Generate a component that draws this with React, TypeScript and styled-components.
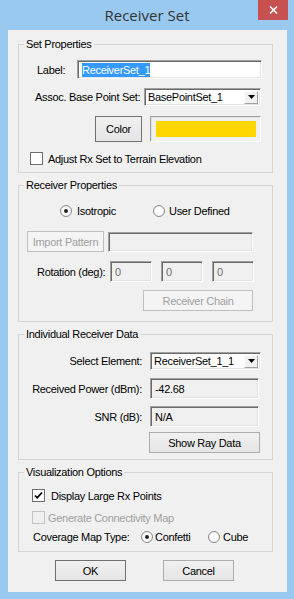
import React from "react";
import styled, { createGlobalStyle } from "styled-components";

const FONT = `"Liberation Sans", Arial, sans-serif`;

const Global = createGlobalStyle`
  html, body {
    margin: 0;
    padding: 0;
    background: #99c9ef;
  }
  * { box-sizing: border-box; }
`;

const Window = styled.div`
  width: 294px;
  height: 599px;
  background: #99c9ef;
  display: flex;
  flex-direction: column;
  font-family: ${FONT};
  font-size: 11px;
  letter-spacing: -0.3px;
  color: #000;
`;

const TitleBar = styled.div`
  height: 30px;
  display: flex;
  align-items: flex-start;
`;

const TitleSpacer = styled.div`
  width: 36px;
`;

const Title = styled.div`
  flex: 1;
  text-align: center;
  font-family: "Open Sans", "Noto Sans", sans-serif;
  font-size: 15px;
  letter-spacing: 0;
  line-height: 20px;
  padding-top: 5px;
  color: #333;
`;

const CloseBtn = styled.div`
  width: 30px;
  height: 20px;
  margin-right: 6px;
  background: #c75050;
  display: flex;
  align-items: center;
  justify-content: center;
`;

const Client = styled.div`
  margin: 0 7px 7px 8px;
  height: 562px;
  background: #f0f0f0;
  padding: 7px 0 0 10px;
`;

const Group = styled.fieldset<{ $h: number; $mt?: number }>`
  margin: ${p => p.$mt || 0}px 0 0 0;
  padding: 0;
  width: 255px;
  height: ${p => p.$h}px;
  border: 1px solid #d5d5d5;
  min-width: 0;
`;

const Legend = styled.legend`
  margin-left: 5px;
  padding: 0 2px;
  height: 14px;
  line-height: 14px;
  color: #000;
`;

const Row = styled.div<{ $mt: number; $h: number; $pl?: number; $gap?: number }>`
  display: flex;
  align-items: center;
  margin-top: ${p => p.$mt}px;
  height: ${p => p.$h}px;
  padding-left: ${p => p.$pl || 0}px;
  gap: ${p => p.$gap || 0}px;
`;

const Cell = styled.div<{ $w: number; $pl?: number; $right?: boolean }>`
  width: ${p => p.$w}px;
  flex: none;
  padding-left: ${p => (p.$right ? 0 : p.$pl || 0)}px;
  padding-right: ${p => (p.$right ? 8 : 0)}px;
  text-align: ${p => (p.$right ? "right" : "left")};
  white-space: nowrap;
`;

const Field = styled.div<{ $w: number; $h?: number; $bg?: string; $dim?: boolean; $ml?: number }>`
  width: ${p => p.$w}px;
  height: ${p => p.$h || 21}px;
  margin-left: ${p => p.$ml || 0}px;
  flex: none;
  background: ${p => p.$bg || "#fff"};
  border: 1px solid;
  border-color: #a0a0a0 #ffffff #ffffff #a0a0a0;
  box-shadow: inset 1px 1px 0 #696969, inset -1px -1px 0 #e3e3e3;
  display: flex;
  align-items: center;
  padding-left: 4px;
  color: ${p => (p.$dim ? "#6d6d6d" : "#000")};
  white-space: nowrap;
`;

const Selected = styled.span`
  background: #3399ff;
  color: #fff;
  padding: 1px 0;
`;

const Combo = styled.div<{ $w: number }>`
  width: ${p => p.$w}px;
  height: 18px;
  flex: none;
  background: #fff;
  border: 1px solid;
  border-color: #a0a0a0 #ffffff #ffffff #a0a0a0;
  box-shadow: inset 1px 1px 0 #696969, inset -1px -1px 0 #e3e3e3;
  display: flex;
  align-items: center;
  padding: 2px 2px 2px 3px;
`;

const ComboText = styled.div`
  flex: 1;
  white-space: nowrap;
`;

const ComboArrow = styled.div`
  width: 14px;
  height: 13px;
  background: #f0f0f0;
  border: 1px solid;
  border-color: #fff #a0a0a0 #a0a0a0 #fff;
  display: flex;
  align-items: center;
  justify-content: center;
`;

const Button = styled.div<{ $w: number; $h?: number; $disabled?: boolean; $dark?: boolean }>`
  width: ${p => p.$w}px;
  height: ${p => p.$h || 21}px;
  flex: none;
  display: flex;
  align-items: center;
  justify-content: center;
  border: 1px solid ${p => (p.$disabled ? "#bfbfbf" : p.$dark ? "#707070" : "#acacac")};
  background: ${p =>
    p.$disabled ? "#f4f4f4" : "linear-gradient(#f0f0f0, #e5e5e5)"};
  color: ${p => (p.$disabled ? "#a0a0a0" : "#000")};
  white-space: nowrap;
`;

const Swatch = styled.div`
  width: 111px;
  height: 26px;
  flex: none;
  border: 1px solid;
  border-color: #a0a0a0 #fff #fff #a0a0a0;
  box-shadow: inset 1px 1px 0 #e3e3e3;
  padding: 4px 4px 4px 5px;
  background: #f0f0f0;
`;

const SwatchFill = styled.div`
  width: 100%;
  height: 100%;
  background: #ffd700;
`;

const Check = styled.div<{ $disabled?: boolean }>`
  width: 13px;
  height: 13px;
  flex: none;
  border: 1px solid ${p => (p.$disabled ? "#c4c4c4" : "#6e6e6e")};
  background: ${p => (p.$disabled ? "#f0f0f0" : "#fff")};
  display: flex;
  align-items: center;
  justify-content: center;
`;

const Radio = styled.div<{ $on?: boolean }>`
  width: 12px;
  height: 12px;
  flex: none;
  border-radius: 50%;
  border: 1px solid #8a8a8a;
  background: radial-gradient(circle, #ffffff 40%, #e6e6e6 100%);
  display: flex;
  align-items: center;
  justify-content: center;
  &::after {
    content: "";
    display: ${p => (p.$on ? "block" : "none")};
    width: 4px;
    height: 4px;
    border-radius: 50%;
    background: #222;
  }
`;

const Option = styled.div<{ $w?: number; $gap: number }>`
  display: flex;
  align-items: center;
  gap: ${p => p.$gap}px;
  width: ${p => (p.$w ? `${p.$w}px` : "auto")};
  flex: none;
`;

const Text = styled.span<{ $dim?: boolean }>`
  color: ${p => (p.$dim ? "#a0a0a0" : "#000")};
  white-space: nowrap;
`;

const ButtonRow = styled.div`
  display: flex;
  margin-top: 8px;
  padding-left: 37px;
  gap: 37px;
`;

const Arrow = () => (
  <svg width="7" height="4" viewBox="0 0 7 4">
    <path d="M0 0h7L3.5 4z" fill="#000" />
  </svg>
);

const Tick = () => (
  <svg width="9" height="9" viewBox="0 0 9 9">
    <path d="M1 4.5l2.2 2.3L8 1.5" stroke="#000" strokeWidth="1.8" fill="none" />
  </svg>
);

export default function App() {
  return (
    <Window>
      <Global />
      <TitleBar>
        <TitleSpacer />
        <Title>Receiver Set</Title>
        <CloseBtn>
          <svg width="9" height="8" viewBox="0 0 9 8">
            <path d="M1 0.5l7 7M8 0.5l-7 7" stroke="#fff" strokeWidth="1.6" />
          </svg>
        </CloseBtn>
      </TitleBar>
      <Client>
        <Group $h={136}>
          <Legend>Set Properties</Legend>
          <Row $mt={9} $h={19}>
            <Cell $w={58} $pl={18}>Label:</Cell>
            <Field $w={185} $h={19}>
              <Selected>ReceiverSet_1</Selected>
            </Field>
          </Row>
          <Row $mt={9} $h={18}>
            <Cell $w={125} $pl={16}>Assoc. Base Point Set:</Cell>
            <Combo $w={117}>
              <ComboText>BasePointSet_1</ComboText>
              <ComboArrow><Arrow /></ComboArrow>
            </Combo>
          </Row>
          <Row $mt={10} $h={26} $pl={76} $gap={8}>
            <Button $w={47} $h={26} $dark>Color</Button>
            <Swatch><SwatchFill /></Swatch>
          </Row>
          <Row $mt={10} $h={13} $pl={11} $gap={5}>
            <Check />
            <Text>Adjust Rx Set to Terrain Elevation</Text>
          </Row>
        </Group>

        <Group $h={144} $mt={5}>
          <Legend>Receiver Properties</Legend>
          <Row $mt={12} $h={13} $pl={41}>
            <Option $w={93} $gap={5}>
              <Radio $on />
              <Text>Isotropic</Text>
            </Option>
            <Option $gap={4}>
              <Radio />
              <Text>User Defined</Text>
            </Option>
          </Row>
          <Row $mt={14} $h={21} $pl={8} $gap={4}>
            <Button $w={77} $disabled>Import Pattern</Button>
            <Field $w={145} $h={20} $bg="#f0f0f0" />
          </Row>
          <Row $mt={9} $h={21}>
            <Cell $w={91} $pl={18}>Rotation (deg):</Cell>
            <Field $w={42} $bg="#f0f0f0" $dim>0</Field>
            <Field $w={42} $bg="#f0f0f0" $dim $ml={9}>0</Field>
            <Field $w={42} $bg="#f0f0f0" $dim $ml={9}>0</Field>
          </Row>
          <Row $mt={8} $h={21} $pl={124}>
            <Button $w={110} $disabled>Receiver Chain</Button>
          </Row>
        </Group>

        <Group $h={133} $mt={5}>
          <Legend>Individual Receiver Data</Legend>
          <Row $mt={11} $h={18}>
            <Cell $w={131} $right>Select Element:</Cell>
            <Combo $w={111}>
              <ComboText>ReceiverSet_1_1</ComboText>
              <ComboArrow><Arrow /></ComboArrow>
            </Combo>
          </Row>
          <Row $mt={8} $h={21}>
            <Cell $w={131} $right>Received Power (dBm):</Cell>
            <Field $w={109} $bg="#f0f0f0">-42.68</Field>
          </Row>
          <Row $mt={7} $h={21}>
            <Cell $w={131} $right>SNR (dB):</Cell>
            <Field $w={109} $bg="#f0f0f0">N/A</Field>
          </Row>
          <Row $mt={5} $h={21} $pl={130}>
            <Button $w={111}>Show Ray Data</Button>
          </Row>
        </Group>

        <Group $h={87} $mt={5}>
          <Legend>Visualization Options</Legend>
          <Row $mt={10} $h={13} $pl={13} $gap={6}>
            <Check><Tick /></Check>
            <Text>Display Large Rx Points</Text>
          </Row>
          <Row $mt={9} $h={13} $pl={13} $gap={3}>
            <Check $disabled />
            <Text $dim>Generate Connectivity Map</Text>
          </Row>
          <Row $mt={6} $h={13}>
            <Cell $w={122} $pl={14}>Coverage Map Type:</Cell>
            <Option $w={67} $gap={2}>
              <Radio $on />
              <Text>Confetti</Text>
            </Option>
            <Option $gap={3}>
              <Radio />
              <Text>Cube</Text>
            </Option>
          </Row>
        </Group>

        <ButtonRow>
          <Button $w={71} $dark>OK</Button>
          <Button $w={71}>Cancel</Button>
        </ButtonRow>
      </Client>
    </Window>
  );
}
